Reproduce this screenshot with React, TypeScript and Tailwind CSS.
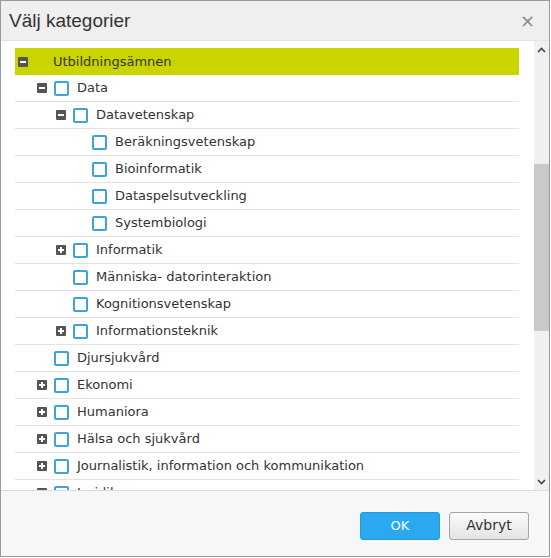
import React from 'react';

type Node = { label: string; level: number; expander?: 'plus' | 'minus'; highlight?: boolean };

const rows: Node[] = [
  { label: 'Utbildningsämnen', level: 0, expander: 'minus', highlight: true },
  { label: 'Data', level: 1, expander: 'minus' },
  { label: 'Datavetenskap', level: 2, expander: 'minus' },
  { label: 'Beräkningsvetenskap', level: 3 },
  { label: 'Bioinformatik', level: 3 },
  { label: 'Dataspelsutveckling', level: 3 },
  { label: 'Systembiologi', level: 3 },
  { label: 'Informatik', level: 2, expander: 'plus' },
  { label: 'Människa- datorinteraktion', level: 2 },
  { label: 'Kognitionsvetenskap', level: 2 },
  { label: 'Informationsteknik', level: 2, expander: 'plus' },
  { label: 'Djursjukvård', level: 1 },
  { label: 'Ekonomi', level: 1, expander: 'plus' },
  { label: 'Humaniora', level: 1, expander: 'plus' },
  { label: 'Hälsa och sjukvård', level: 1, expander: 'plus' },
  { label: 'Journalistik, information och kommunikation', level: 1, expander: 'plus' },
  { label: 'Juridik', level: 1, expander: 'plus' },
];

const indent = ['pl-[3px]', 'pl-[22px]', 'pl-[41px]', 'pl-[60px]'];

function Expander({ kind }: { kind?: 'plus' | 'minus' }) {
  if (!kind) return <span className="w-[10px] h-[10px] shrink-0" />;
  return (
    <span className="relative w-[10px] h-[10px] shrink-0 bg-[#555] rounded-[1px]">
      <span className="absolute left-[2px] top-[4px] w-[6px] h-[2px] bg-white" />
      {kind === 'plus' && <span className="absolute left-[4px] top-[2px] w-[2px] h-[6px] bg-white" />}
    </span>
  );
}

function Row({ node }: { node: Node }) {
  if (node.highlight) {
    return (
      <div className={`flex items-center h-[27px] bg-[#c9d400] ${indent[node.level]}`}>
        <Expander kind={node.expander} />
        <span className="ml-[25px] text-[13px] text-[#333]">{node.label}</span>
      </div>
    );
  }
  return (
    <div className={`flex items-center h-[27px] border-b border-[#e3e3e3] ${indent[node.level]}`}>
      <Expander kind={node.expander} />
      <span className="ml-[7px] w-[15px] h-[15px] shrink-0 border-2 border-[#3da3db] rounded-[2px] bg-white" />
      <span className="ml-[8px] text-[13px] text-[#333] whitespace-nowrap">{node.label}</span>
    </div>
  );
}

export default function App() {
  return (
    <div className="w-[550px] h-[557px] flex flex-col border border-[#9b9b9b] bg-white" style={{ fontFamily: '"DejaVu Sans", Verdana, sans-serif' }}>
      <div className="h-[40px] shrink-0 flex items-center justify-between bg-[#efefef] border-b border-[#e2e2e2] pl-[8px] pr-[14px]">
        <span className="text-[19px] text-[#333] mt-[1px]" style={{ fontFamily: '"Liberation Sans", Arial, sans-serif' }}>Välj kategorier</span>
        <span className="text-[18px] text-[#8a8a8a] leading-none mt-[1px]">×</span>
      </div>
      <div className="flex flex-1 min-h-0">
        <div className="flex-1 overflow-hidden pt-[7px] pl-[14px] pr-[15px]">
          {rows.map((n) => (
            <Row key={n.label} node={n} />
          ))}
        </div>
        <div className="w-[15px] shrink-0 bg-[#f0f0f0] flex flex-col items-center">
          <svg width="9" height="6" viewBox="0 0 9 6" className="mt-[6px]">
            <path d="M1 5 L4.5 1.5 L8 5" fill="none" stroke="#444" strokeWidth="1.6" />
          </svg>
          <div className="mt-[111px] w-full h-[167px] bg-[#c9c9c9]" />
          <div className="flex-1" />
          <svg width="9" height="6" viewBox="0 0 9 6" className="mb-[5px]">
            <path d="M1 1 L4.5 4.5 L8 1" fill="none" stroke="#444" strokeWidth="1.6" />
          </svg>
        </div>
      </div>
      <div className="h-[66px] shrink-0 bg-[#f7f7f7] border-t border-[#dcdcdc] flex items-center justify-end gap-[9px] pr-[20px] pt-[4px]">
        <button className="w-[80px] h-[28px] rounded-[3px] bg-[#2aa8f0] border border-[#219ce0] text-white text-[13px]">OK</button>
        <button className="w-[80px] h-[28px] rounded-[3px] bg-gradient-to-b from-[#fbfbfb] to-[#e4e4e4] border border-[#a5a5a5] text-[#333] text-[14px]">Avbryt</button>
      </div>
    </div>
  );
}
